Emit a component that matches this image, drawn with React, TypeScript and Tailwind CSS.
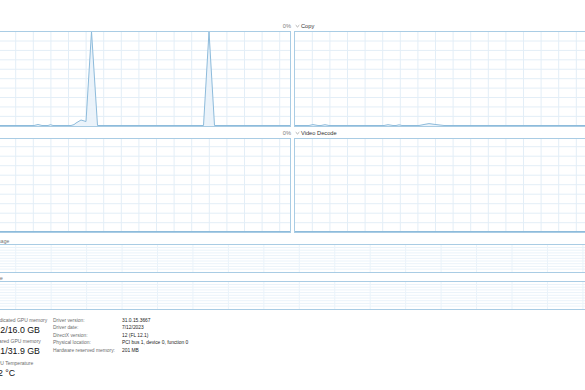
import React from "react";

type Pt = [number, number];

type ChartProps = {
  x: number;
  y: number;
  w: number;
  h: number;
  vStart: number;
  vStep: number;
  hStart: number;
  hStep: number;
  gridColor: string;
  data?: Pt[];
  baseline?: boolean;
  className: string;
};

function Chart({ x, y, w, h, vStart, vStep, hStart, hStep, gridColor, data, baseline, className }: ChartProps) {
  const ix = x + 1;
  const iy = y + 1;
  const iw = w - 2;
  const ih = h - 2;
  const vs: number[] = [];
  for (let vx = vStart; vx < ix + iw; vx += vStep) if (vx > ix) vs.push(vx);
  const hs: number[] = [];
  for (let hy = hStart; hy < iy + ih - 1; hy += hStep) hs.push(hy);
  const B = iy + ih - 0.5;
  let pts: Pt[] = [];
  if (baseline) {
    pts = [[ix, B], ...(data || []), [ix + iw, B]];
  }
  const line = pts.map((p) => `${p[0]},${p[1]}`).join(" ");
  const poly = pts.length ? `${line} ${ix + iw},${B + 0.5} ${ix},${B + 0.5}` : "";
  return (
    <div className={`relative shrink-0 border border-[#a9cce4] bg-white ${className}`}>
      <svg
        className="absolute inset-0 h-full w-full"
        viewBox={`${ix} ${iy} ${iw} ${ih}`}
        preserveAspectRatio="none"
      >
        {hs.map((hy, i) => (
          <line key={`h${i}`} x1={ix} x2={ix + iw} y1={hy} y2={hy} stroke={gridColor} strokeWidth={1} />
        ))}
        {vs.map((vx, i) => (
          <line key={`v${i}`} x1={vx} x2={vx} y1={iy} y2={iy + ih} stroke={gridColor} strokeWidth={1} />
        ))}
        {pts.length > 0 && <polygon points={poly} fill="#e9f2fa" fillOpacity={0.9} />}
        {pts.length > 0 && (
          <polyline points={line} fill="none" stroke="#8dbbdb" strokeWidth={1} strokeLinejoin="round" />
        )}
      </svg>
    </div>
  );
}

function Chevron() {
  return (
    <svg width="5" height="4" viewBox="0 0 5 4" className="shrink-0">
      <path d="M0.7 1.2 L2.5 2.9 L4.3 1.2" fill="none" stroke="#8a8a8a" strokeWidth="0.7" />
    </svg>
  );
}

const leftData: Pt[] = [
  [34, 125.5],
  [38, 124.5],
  [42, 125.5],
  [48, 125.5],
  [50.5, 124.7],
  [53, 125.5],
  [71, 125.5],
  [74, 124.6],
  [76, 123],
  [81, 120],
  [86, 121.5],
  [91.5, 31.5],
  [97.5, 125.5],
  [203.5, 125.5],
  [209, 31.5],
  [214.5, 125.5],
];

const copyData: Pt[] = [
  [309, 125.5],
  [313, 124.6],
  [318, 125.5],
  [321, 125.5],
  [325, 124.7],
  [329, 125.5],
  [384, 125.5],
  [388, 124.7],
  [393, 125.5],
  [396, 125.5],
  [399, 124.8],
  [402, 125.5],
  [419, 125.5],
  [425, 124.3],
  [429, 123.6],
  [434, 124.3],
  [444, 125.5],
];

export default function App() {
  const font = "font-['Liberation_Sans',Arial,sans-serif]";
  return (
    <div className={`relative h-[390px] w-[585px] overflow-hidden bg-white ${font}`}>
      <div className="ml-[-60px] flex w-[720px] flex-col">
        <div className="h-[20px]" />
        {/* Row 1 header */}
        <div className="flex h-[11px] items-center gap-[3px] pt-[1.5px] text-[5.7px] leading-[7px]">
          <div className="flex w-[351px] items-center justify-between">
            <div className="flex items-center gap-[1px] pl-[1px]">
              <Chevron />
              <span className="text-[#333]">3D</span>
            </div>
            <span className="text-[#808080]">0%</span>
          </div>
          <div className="flex w-[351px] items-center justify-between">
            <div className="flex items-center gap-[1px] pl-[1px]">
              <Chevron />
              <span className="text-[#333]">Copy</span>
            </div>
            <span className="text-[#808080]">0%</span>
          </div>
        </div>
        {/* Row 1 charts */}
        <div className="flex gap-[3px]">
          <Chart
            className="h-[96px] w-[351px]"
            x={-60}
            y={31}
            w={351}
            h={96}
            vStart={15.7 - 17.6 * 4}
            vStep={17.6}
            hStart={41}
            hStep={9.42}
            gridColor="#e3eef7"
            data={leftData}
            baseline
          />
          <Chart
            className="h-[96px] w-[351px]"
            x={294}
            y={31}
            w={351}
            h={96}
            vStart={312.3}
            vStep={17.6}
            hStart={41}
            hStep={9.42}
            gridColor="#e3eef7"
            data={copyData}
            baseline
          />
        </div>
        {/* Row 2 header */}
        <div className="flex h-[11px] items-center gap-[3px] pt-[1px] text-[5.7px] leading-[7px]">
          <div className="flex w-[351px] items-center justify-between">
            <div className="flex items-center gap-[1px] pl-[1px]">
              <Chevron />
              <span className="text-[#333]">Video Encode</span>
            </div>
            <span className="text-[#808080]">0%</span>
          </div>
          <div className="flex w-[351px] items-center justify-between">
            <div className="flex items-center gap-[1px] pl-[1px]">
              <Chevron />
              <span className="text-[#333]">Video Decode</span>
            </div>
            <span className="text-[#808080]">0%</span>
          </div>
        </div>
        {/* Row 2 charts */}
        <div className="flex gap-[3px]">
          <Chart
            className="h-[95px] w-[351px]"
            x={-60}
            y={138}
            w={351}
            h={95}
            vStart={15.7 - 17.6 * 4}
            vStep={17.6}
            hStart={146.7}
            hStep={9.5}
            gridColor="#e3eef7"
            data={[]}
            baseline
          />
          <Chart
            className="h-[95px] w-[351px]"
            x={294}
            y={138}
            w={351}
            h={95}
            vStart={312.3}
            vStep={17.6}
            hStart={146.7}
            hStep={9.5}
            gridColor="#e3eef7"
            data={[]}
            baseline
          />
        </div>
        {/* Dedicated memory usage */}
        <div className="flex h-[11px] w-[705px] items-end justify-between text-[5px] leading-[6px] text-[#707070]">
          <span>Dedicated GPU memory usage</span>
          <span>16.0 GB</span>
        </div>
        <Chart
          className="h-[29px] w-[705px]"
          x={-60}
          y={244}
          w={705}
          h={29}
          vStart={15.7 - 35.45 * 2}
          vStep={35.45}
          hStart={247.5}
          hStep={2.7}
          gridColor="#eaf3fa"
        />
        {/* Shared memory usage */}
        <div className="flex h-[8px] w-[705px] items-end justify-between text-[5px] leading-[6px] text-[#707070]">
          <span>Shared GPU memory usage</span>
          <span>31.9 GB</span>
        </div>
        <Chart
          className="h-[29px] w-[705px]"
          x={-60}
          y={281}
          w={705}
          h={29}
          vStart={15.7 - 35.45 * 2}
          vStep={35.45}
          hStart={284.5}
          hStep={2.7}
          gridColor="#eaf3fa"
        />
        {/* Stats */}
        <div className="flex items-start pt-[6.5px]">
          <div className="flex w-[53px] shrink-0 flex-col overflow-hidden">
            <div className="h-[7px] text-[5px] leading-[7px] text-[#6d6d6d]">Utilization</div>
            <div className="h-[12px] text-[8.5px] leading-[12px] text-[#1b1b1b]">0%</div>
            <div className="mt-[2.5px] h-[7px] text-[5px] leading-[7px] text-[#6d6d6d]">GPU Memory</div>
            <div className="h-[12px] text-[8.5px] leading-[12px] text-[#1b1b1b]">1.3/47.9 GB</div>
          </div>
          <div className="flex w-[60px] shrink-0 flex-col whitespace-nowrap">
            <div className="h-[7px] text-[5px] leading-[7px] text-[#6d6d6d]">Dedicated GPU memory</div>
            <div className="h-[12px] text-[8.8px] leading-[12px] text-[#111]">1.2/16.0 GB</div>
            <div className="mt-[2.5px] h-[7px] text-[5px] leading-[7px] text-[#6d6d6d]">Shared GPU memory</div>
            <div className="h-[12px] text-[8.8px] leading-[12px] text-[#111]">0.1/31.9 GB</div>
            <div className="mt-[2.5px] h-[7px] text-[5px] leading-[7px] text-[#6d6d6d]">GPU Temperature</div>
            <div className="h-[12px] text-[8.8px] leading-[12px] text-[#111]">42 °C</div>
          </div>
          <div className="grid grid-cols-[69px_auto] content-start text-[4.9px] leading-[7.5px] whitespace-nowrap">
            <span className="text-[#6d6d6d]">Driver version:</span>
            <span className="text-[#1b1b1b]">31.0.15.3667</span>
            <span className="text-[#6d6d6d]">Driver date:</span>
            <span className="text-[#1b1b1b]">7/12/2023</span>
            <span className="text-[#6d6d6d]">DirectX version:</span>
            <span className="text-[#1b1b1b]">12 (FL 12.1)</span>
            <span className="text-[#6d6d6d]">Physical location:</span>
            <span className="text-[#1b1b1b]">PCI bus 1, device 0, function 0</span>
            <span className="text-[#6d6d6d]">Hardware reserved memory:</span>
            <span className="text-[#1b1b1b]">201 MB</span>
          </div>
        </div>
      </div>
    </div>
  );
}
